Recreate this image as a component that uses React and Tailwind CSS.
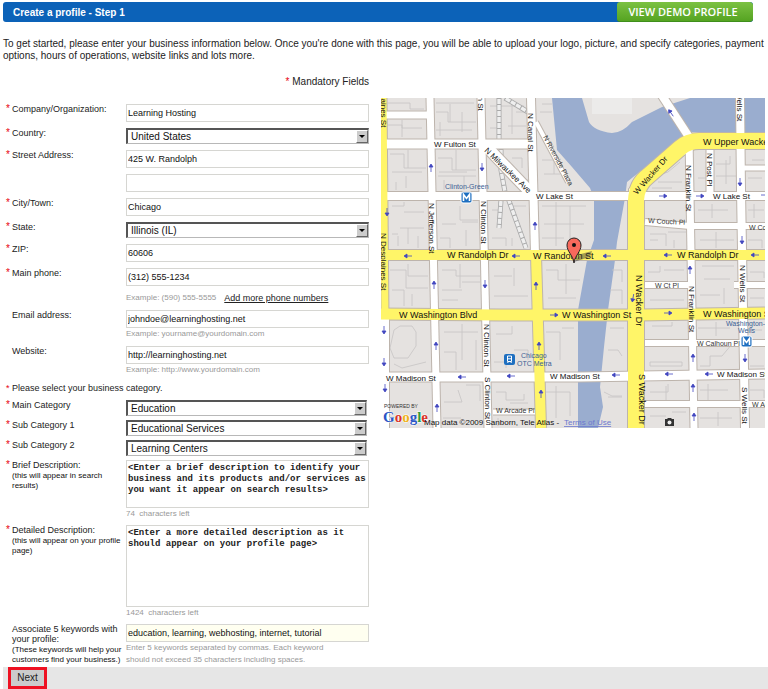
const COUNTRIES = ["United States", "Canada"];
const STATES = ["Illinois (IL)", "Indiana (IN)"];

// ============================
// Form pieces
function Row({ id, label, note, required, children }) {
  return (
    <div className="grid grid-cols-[6px_114px_minmax(0,1fr)]">
      <span className="text-[10px] leading-[10px] text-red-600">{required ? "*" : ""}</span>
      <label htmlFor={id} className="text-[9px] leading-[10px] text-[#222]">
        {label}
        {note ? <span className="block pt-px text-[8px] leading-[10px] text-[#111]">{note}</span> : null}
      </label>
      <div className="min-w-0">{children}</div>
    </div>
  );
}

function TextInput({ id, value, label, className = "bg-white" }) {
  return (
    <input
      id={id}
      aria-label={label}
      defaultValue={value}
      className={`block h-[18px] w-full border border-[#d6d6d2] px-px text-[9px] text-[#111] outline-none ${className}`}
    />
  );
}

function SelectInput({ id, options }) {
  return (
    <div className="relative">
      <select
        id={id}
        className="block h-4 w-full appearance-none border-t-2 border-r border-b border-l-2 border-[#b8b8b8] border-t-[#555] border-l-[#555] bg-white pl-[3px] text-[10px] leading-3 text-[#111] outline-none"
      >
        {options.map((option) => (
          <option key={option}>{option}</option>
        ))}
      </select>
      <span className="pointer-events-none absolute top-0.5 right-px bottom-px flex w-3 items-center justify-center border border-t-white border-r-[#666] border-b-[#666] border-l-white bg-[#ccc]">
        <svg viewBox="0 0 6 3" className="h-[3px] w-1.5">
          <path d="M0 0h6L3 3z" fill="#000" />
        </svg>
      </span>
    </div>
  );
}

function TextArea({ id, value, className }) {
  return (
    <textarea
      id={id}
      defaultValue={value}
      className={`block w-full resize-none border border-[#d6d6d2] bg-white px-px py-0.5 font-['Liberation_Mono',monospace] text-[9px] leading-[11px] font-bold text-[#222] outline-none ${className}`}
    />
  );
}

function Hint({ children }) {
  return <p className="text-[8px] leading-3 text-[#999]">{children}</p>;
}

// ============================
// Street map
const ROADS = [
  { d: "M381 144H532", w: 9 },
  { d: "M381 115H429", w: 7 },
  { d: "M381 196H765", w: 8 },
  { d: "M381 377L580 377L765 374", w: 9 },
  { d: "M430 98L437 428", w: 7 },
  { d: "M481 98L488 428", w: 7 },
  { d: "M531 98L535 254", w: 8 },
  { d: "M486 146L530 192", w: 11 },
  { d: "M385 316V428", w: 8 },
  { d: "M661 94L689 137", w: 8 },
  { d: "M689 137L694 428", w: 7 },
  { d: "M740 98L741 190L745 428", w: 8 },
  { d: "M710 150V194", w: 7 },
  { d: "M645 222L690 226H765", w: 6 },
  { d: "M645 285H690", w: 6 },
  { d: "M734 285H765", w: 6 },
  { d: "M645 343H765", w: 6 },
  { d: "M645 404H765", w: 6 },
  { d: "M493 412H535", w: 5 },
  { d: "M741 168H765", w: 5 },
  { d: "M536 122L568 182", w: 4 },
  { d: "M632 262L631 190L645 178L686 151", w: 4 },
];

const MAIN_ROADS = [
  { d: "M381 255H765", w: 10 },
  { d: "M381 314L500 315L640 315L765 313", w: 11 },
  { d: "M383 98L385 318", w: 7 },
  { d: "M536 255L541 428", w: 10 },
  { d: "M636 428V200Q637 184 648 176L680 148Q688 141 699 141H765", w: 16 },
];

const BUILDINGS = [
  "M388 103h22v6h14M388 125h14v12M402 120v8h20M390 154h14v14h22M408 150v18M392 172h30M396 182v8M406 176v12",
  "M392 206h12v-4M404 212h20M400 228h24M398 236v10M408 228v16M418 236v12M392 234h6",
  "M390 270h16v18h22M408 264v12h20M392 290h12v16M412 294v12M394 330l6-4h12l4 6v14l-8 12h-14l-4-10zM394 364l8 4 24-6",
  "M436 103h38M436 112h12v10h28M450 104v18M462 112v20M436 130h36M440 122v14",
  "M438 158h14v12h24M456 150v20M438 176h38M444 180v10M464 176v14M439 172h28",
  "M460 206v14h18M442 224h14M462 222h16M440 238h10v10M466 230v16",
  "M442 270h14v6h24M460 264v24M442 290h20M462 282h18M442 300h16",
  "M444 332h34M462 324v36M444 352h12v18M476 340v30M444 402h18l-4-12M466 385h14v16M443 418h18",
  "M490 106h34M512 100v34M516 112h12M508 126h18M490 128h8M512 158h10v10M518 180h10M492 160h8",
  "M512 206h14M492 210h6M492 238h14v8M512 238v8M494 276h18M514 268v18M494 296h34",
  "M496 334h16v-8M514 350h14v10M494 362h12v6M496 392h10v8h18v-6M510 403h18M498 418v8",
  "M542 104h10M540 112h12M542 160h12v14M544 174h16M542 206h44M556 202v44M544 224h40M570 206v40M542 238h22",
  "M546 270h12v10h22M566 264v30M548 298h28M546 332h14v28M562 328h12M546 392h24v24M556 386v32",
  "M610 328h14M608 350h10l4 6M604 392l8 4h10M608 397h14M612 270h10v12M610 290h12v14",
  "M650 178l18-6 12-10M652 188h20M658 182h24M650 234h16v12M668 232h18M650 240h8M674 240v8",
  "M648 272h12v-6M664 270h20M650 300h34M652 326h20v-4M650 362h32v4h-32zM650 392h18v-8M666 386v16M650 416h16M672 412h14",
  "M698 178h8M716 164h14v-8M726 160v24M716 176h20M698 210h30M712 204v14M700 240h34M716 232v16M702 266h32M704 279h26",
  "M700 295h20M724 288v16M698 328h32M716 322v14M700 366h10v-10h12l10-12M700 390h28M708 384v16M700 418h32M718 412v14",
  "M748 178h14M752 160h12M748 210h16M754 204v14M748 240h14v8M750 272h14v6M750 298h14M750 330h12M750 366h14M750 390h14v8",
];

const ARROWS = [
  [431, 168, -90], [482, 167, 90], [387, 212, 90], [535, 226, -90], [408, 256, 180], [516, 256, 180],
  [434, 285, -90], [485, 284, 90], [536, 286, -90], [384, 330, 90], [384, 362, 90], [436, 346, -90],
  [539, 346, -90], [462, 377, 180], [511, 376, 180], [385, 388, 90], [541, 394, -90], [437, 408, -90],
  [554, 315, 0], [671, 113, 235], [663, 196, 0], [700, 196, 0], [740, 182, 90], [742, 240, 90],
  [607, 256, 180], [668, 255, 180], [755, 255, 180], [690, 270, -90], [633, 298, 100], [668, 313, 0],
  [693, 358, -90], [745, 358, 90], [616, 375, 180], [669, 374, 180], [709, 374, 180], [693, 388, -90],
  [694, 417, -90], [765, 195, 0],
];

const AVENUES = [
  ["W Washington Blvd", 399, 318, 0], ["W Upper Wacker Dr", 703, 145, 0], ["W Washington St", 562, 318, 0],
  ["W Washington St", 703, 317, 0], ["W Randolph Dr", 447, 258, 0], ["W Randolph St", 533, 259, 0],
  ["W Randolph Dr", 677, 258, 0], ["N Wacker Dr", 636, 275, 90], ["S Wacker Dr", 639, 374, 90],
];

const STREETS = [
  ["W Fulton St", 434, 147, 0], ["N Clinton St", 478, 68, 90], ["N Canal St", 528, 113, 90],
  ["N Milwaukee Ave", 484, 151, 44], ["W Lake St", 536, 199, 0], ["N Jefferson St", 429, 203, 90],
  ["N Clinton St", 481, 201, 90], ["W Madison St", 386, 381, 0], ["N Clinton St", 484, 324, 90],
  ["S Clinton St", 485, 377, 90], ["N Desplaines St", 381, 233, 90], ["N Desplaines St", 381, 70, 90],
  ["W Wacker Dr", 637, 195, -49], ["N Franklin St", 686, 165, 90], ["N Post Pl", 707, 153, 90],
  ["N Wells St", 737, 84, 90], ["W Lake St", 713, 199, 0], ["N Franklin St", 689, 286, 90],
  ["N Wells St", 740, 265, 90], ["W Madison St", 550, 379, 0], ["W Madison St", 717, 377, 0],
  ["S Wells St", 742, 387, 90],
];

const LANES = [
  ["N Riverside Plaza", 543, 137, 62], ["W Couch Pl", 648, 223, 3], ["W Couch Pl", 749, 230, 0],
  ["W Ct Pl", 655, 288, 0], ["W Calhoun Pl", 697, 346, 0], ["W Arcade Pl", 496, 413, 0],
  ["W Arcade Pl", 752, 407, 0],
];

function Labels({ items }) {
  return items.map(([name, x, y, angle]) => (
    <text key={`${x}-${y}`} transform={`translate(${x} ${y}) rotate(${angle})`}>
      {name}
    </text>
  ));
}

function Metro({ x, y }) {
  return (
    <g transform={`translate(${x} ${y})`}>
      <rect width="11" height="11" rx="2" fill="#1e6fc0" stroke="#fff" />
      <path d="M2.5 9V2.5L5.5 6.5L8.5 2.5V9" fill="none" stroke="#fff" strokeWidth="1.6" />
    </g>
  );
}

function StreetMap() {
  return (
    <svg
      viewBox="381 98 384 330"
      role="img"
      aria-label="Map of 425 W. Randolph, Chicago"
      className="block w-full font-['Liberation_Sans',Arial,sans-serif]"
    >
      <rect x="381" y="98" width="384" height="330" fill="#e5e2e0" />
      <path
        d="M552 98L557 150L572 167L590 188L594 198V240L587 260L578 310V428H598L603 407L600 387L604 347L608 310L615 260L617 242L625 198L627 182L689 132H765V98H690L662 107L632 122Q622 133 612 133Q594 131 589 122L582 98Z"
        fill="#9aadcf"
      />
      <path d="M592 98H632V114H592Z" fill="#ecebea" />

      <g fill="none" stroke="#c6c4c4" strokeWidth="0.8">
        {BUILDINGS.map((d) => (
          <path key={d} d={d} />
        ))}
      </g>

      {/* rail lines */}
      {["M499 98V139", "M501 149V170L505 192", "M501 200L499 228", "M508 198L526 248", "M505 98L528 112"].map((d) => (
        <g key={d} fill="none">
          <path d={d} stroke="#aaa" strokeWidth="5" />
          <path d={d} stroke="#efefef" strokeWidth="3.4" />
          <path d={d} stroke="#aaa" strokeWidth="4" strokeDasharray="1 5" />
        </g>
      ))}

      <g fill="none">
        {[...ROADS, ...MAIN_ROADS].map(({ d, w }) => (
          <path key={d} d={d} stroke="#bdb4ac" strokeWidth={w + 2} />
        ))}
        {ROADS.map(({ d, w }) => (
          <path key={d} d={d} stroke="#fff" strokeWidth={w} />
        ))}
        {MAIN_ROADS.map(({ d, w }) => (
          <path key={d} d={d} stroke="#fff568" strokeWidth={w} />
        ))}
      </g>

      {ARROWS.map(([x, y, angle]) => (
        <path
          key={`${x}-${y}`}
          d="M-4 0H3M1 -2L4 0L1 2Z"
          transform={`translate(${x} ${y}) rotate(${angle})`}
          fill="#4348c0"
          stroke="#4348c0"
          strokeWidth="0.8"
        />
      ))}

      <g fontSize="9" fill="#111">
        <Labels items={AVENUES} />
      </g>
      <g fontSize="8" fill="#111">
        <Labels items={STREETS} />
      </g>
      <g fontSize="7" fill="#333">
        <Labels items={LANES} />
      </g>

      <g fontSize="7" fill="#3c5f95">
        <text x="445" y="189">Clinton-Green</text>
        <text x="521" y="358">Chicago</text>
        <text x="517" y="366">OTC Metra</text>
        <text x="726" y="326">Washington-</text>
        <text x="738" y="333">Wells</text>
      </g>
      <Metro x={461} y={192} />
      <Metro x={741} y={336} />
      <g transform="translate(504 354)">
        <rect width="11" height="11" rx="2" fill="#1e6fc0" />
        <path d="M3.5 2H7.5V7.5H3.5ZM3.5 4.8H7.5M3.5 9L4.5 7.5M7.5 9L6.5 7.5" fill="none" stroke="#fff" />
      </g>
      <path d="M665 419H667L668 418H671L672 419H674V426H665Z" fill="#333" />
      <circle cx="669.5" cy="422.5" r="2" fill="#eee" />

      {/* location pin */}
      <path d="M574 262L581 254L592 251L590 257L580 260Z" fill="#333" opacity="0.45" />
      <path
        d="M574 263C573 255 567 252 567 245A7 7 0 0 1 581 245C581 252 575 255 574 263Z"
        fill="#f8695c"
        stroke="#222"
      />
      <circle cx="574" cy="245" r="2" fill="#111" />

      <text x="384" y="408" fontSize="5" fill="#333">POWERED BY</text>
      <text
        x="383"
        y="422"
        fontSize="15"
        fontWeight="bold"
        stroke="#fff"
        strokeWidth="1"
        paintOrder="stroke"
        className="font-['Liberation_Serif',serif]"
      >
        <tspan fill="#2a56c6">G</tspan>
        <tspan fill="#d9332a">o</tspan>
        <tspan fill="#efb31c">o</tspan>
        <tspan fill="#2a56c6">g</tspan>
        <tspan fill="#2f9a41">l</tspan>
        <tspan fill="#d9332a">e</tspan>
      </text>
      <text x="424" y="425" fontSize="8" fill="#111">Map data ©2009 Sanborn, Tele Atlas -</text>
      <a href="#terms">
        <text x="564" y="425" fontSize="8" fill="#6c78d0" textDecoration="underline">Terms of Use</text>
      </a>
    </svg>
  );
}

// ============================
// Page
export default function App() {
  return (
    <main className="bg-white pl-[3px] pt-0.5 font-['Liberation_Sans',Arial,sans-serif] text-[#222]">
      <header className="mr-[15px] flex h-5 overflow-hidden rounded-[3px] bg-[#0c62b8]">
        <h1 className="flex-1 pl-2.5 text-[10px] leading-[21px] font-bold text-white">Create a profile - Step 1</h1>
        <button
          type="button"
          className="w-[136px] rounded-[3px] border-b border-[#3f8f1c] bg-linear-to-b from-[#7cc142] to-[#55a421] pr-1 font-['Open_Sans',sans-serif] text-[11px] leading-5 font-semibold text-white"
        >
          VIEW DEMO PROFILE
        </button>
      </header>

      <p className="mt-4 text-[10px] leading-3">
        To get started, please enter your business information below. Once you're done with this page, you will be able to
        upload your logo, picture, and specify categories, payment options, hours of operations, website links and lots more.
      </p>

      <div className="mt-3.5 flex items-start gap-3 pr-[3px]">
        <form id="profile" className="w-[366px] shrink-0 pl-[3px]" onSubmit={(e) => e.preventDefault()}>
          <p className="mb-4 text-right text-[10px] leading-3">
            <span className="text-red-600">*</span> Mandatory Fields
          </p>

          <div className="space-y-1.5">
            <Row id="company" label="Company/Organization:" required>
              <TextInput id="company" value="Learning Hosting" />
            </Row>
            <Row id="country" label="Country:" required>
              <SelectInput id="country" options={COUNTRIES} />
            </Row>
            <Row id="street" label="Street Address:" required>
              <div className="space-y-1.5">
                <TextInput id="street" value="425 W. Randolph" />
                <TextInput id="street2" label="Street Address, line 2" value="" />
              </div>
            </Row>
            <Row id="city" label="City/Town:" required>
              <TextInput id="city" value="Chicago" />
            </Row>
            <Row id="state" label="State:" required>
              <SelectInput id="state" options={STATES} />
            </Row>
            <Row id="zip" label="ZIP:" required>
              <TextInput id="zip" value="60606" />
            </Row>
            <Row id="phone" label="Main phone:" required>
              <TextInput id="phone" value="(312) 555-1234" />
              <div className="flex items-center gap-2 pt-1.5">
                <Hint>Example: (590) 555-5555</Hint>
                <a href="#phones" className="text-[9px] leading-3 underline">
                  Add more phone numbers
                </a>
              </div>
            </Row>
            <Row id="email" label="Email address:">
              <TextInput id="email" value="johndoe@learninghosting.net" />
              <Hint>Example: yourname@yourdomain.com</Hint>
            </Row>
            <Row id="website" label="Website:">
              <TextInput id="website" value="http://learninghosting.net" />
              <Hint>Example: http://www.yourdomain.com</Hint>
            </Row>
          </div>

          <p className="my-1.5 text-[9px] leading-3">
            <span className="inline-block w-1.5 text-red-600">*</span>Please select your business category.
          </p>

          <div className="space-y-1 pr-0.5">
            <Row id="category" label="Main Category" required>
              <SelectInput id="category" options={["Education"]} />
            </Row>
            <Row id="sub1" label="Sub Category 1" required>
              <SelectInput id="sub1" options={["Educational Services"]} />
            </Row>
            <Row id="sub2" label="Sub Category 2" required>
              <SelectInput id="sub2" options={["Learning Centers"]} />
            </Row>
          </div>

          <div className="mt-1 space-y-[5px]">
            <Row id="brief" label="Brief Description:" note="(this will appear in search results)" required>
              <TextArea
                id="brief"
                className="h-12"
                value="<Enter a brief description to identify your business and its products and/or services as you want it appear on search results>"
              />
              <Hint>74&nbsp; characters left</Hint>
            </Row>
            <Row id="detailed" label="Detailed Description:" note="(this will appear on your profile page)" required>
              <TextArea
                id="detailed"
                className="h-[82px]"
                value="<Enter a more detailed description as it should appear on your profile page>"
              />
              <Hint>1424&nbsp; characters left</Hint>
            </Row>
            <Row
              id="keywords"
              label="Associate 5 keywords with your profile:"
              note="(These keywords will help your customers find your business.)"
            >
              <TextInput
                id="keywords"
                value="education, learning, webhosting, internet, tutorial"
                className="bg-[#fffff0]"
              />
              <div className="pr-8">
                <Hint>
                  Enter 5 keywords separated by commas. Each keyword should not exceed 35 characters including spaces.
                </Hint>
              </div>
            </Row>
          </div>
        </form>

        <section className="min-w-0 flex-1 pt-[22px]">
          <StreetMap />
        </section>
      </div>

      <footer className="mt-px flex h-[22px] bg-[#e6e6e6] pl-[5px]">
        <button
          type="submit"
          form="profile"
          className="w-[39px] border-[3px] border-[#ee1122] bg-[#ccc] text-[10px] leading-4 text-[#222]"
        >
          Next
        </button>
      </footer>
    </main>
  );
}
